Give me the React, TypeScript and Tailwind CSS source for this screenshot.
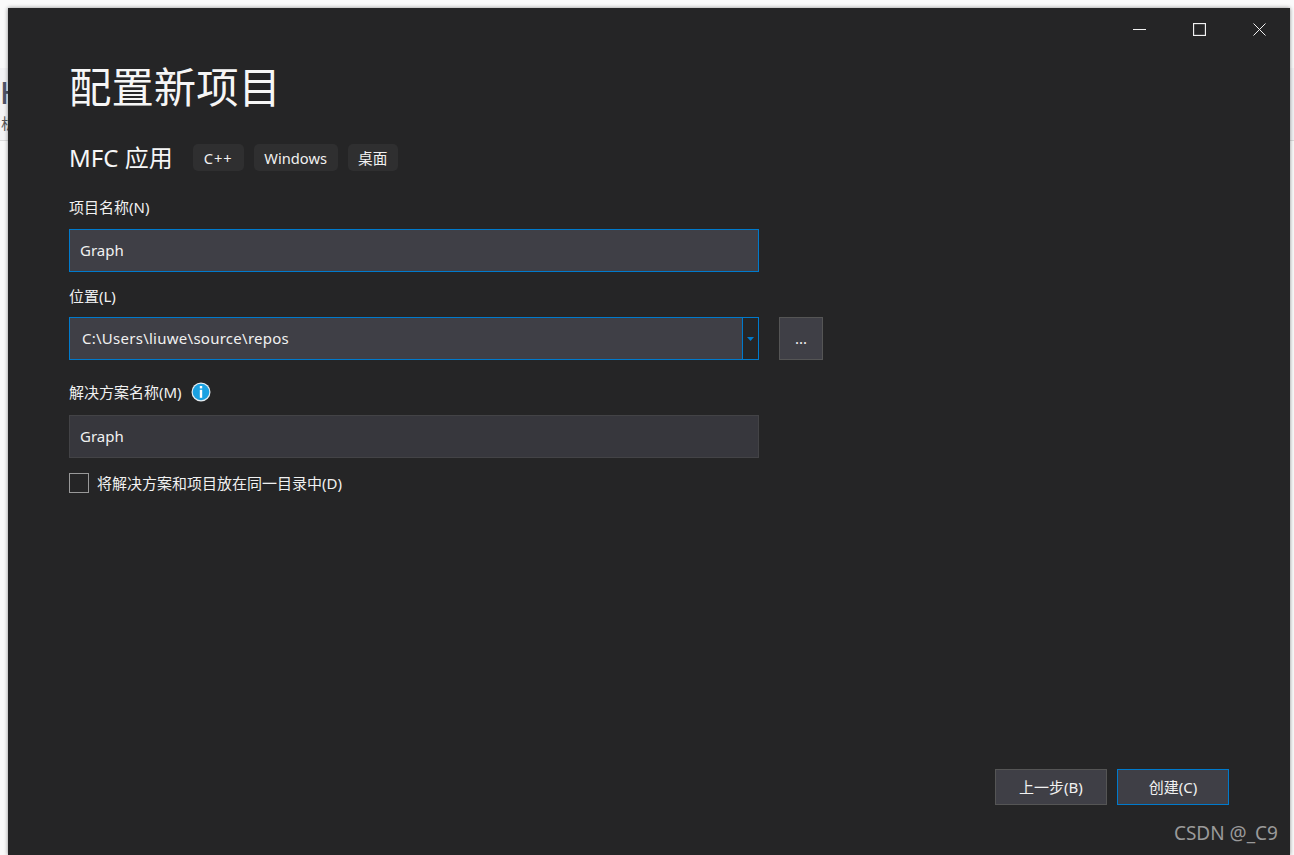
const font = "font-['Noto_Sans','Noto_Sans_CJK_SC',sans-serif]";

function Label({ children }: { children: React.ReactNode }) {
  return <div className="h-[22px] text-[15px] leading-[22px] text-[#f1f1f1]">{children}</div>;
}

function Tag({ children, width }: { children: React.ReactNode; width: string }) {
  return (
    <span className={`flex h-[27px] items-center justify-center rounded-[5px] bg-[#2f2f30] text-[14.67px] text-[#f1f1f1] ${width}`}>
      {children}
    </span>
  );
}

function InfoIcon() {
  return (
    <svg width="20" height="20" viewBox="0 0 20 20">
      <circle cx="10" cy="10" r="9.5" fill="#e8eef2" />
      <circle cx="10" cy="10" r="8.3" fill="#1ba1e2" />
      <rect x="8.8" y="4" width="2.4" height="2.4" fill="#fff" />
      <rect x="8.8" y="7.8" width="2.4" height="8" fill="#fff" />
    </svg>
  );
}

function WindowControls() {
  return (
    <div className="flex h-[42px] items-center justify-end gap-[47px] pr-[24px]">
      <svg width="13" height="13" viewBox="0 0 13 13" stroke="#f1f1f1" fill="none">
        <path d="M0 6.5H13" />
      </svg>
      <svg width="13" height="13" viewBox="0 0 13 13" stroke="#f1f1f1" fill="none">
        <rect x="0.5" y="0.5" width="12" height="12" strokeWidth="1.3" />
      </svg>
      <svg width="13" height="13" viewBox="0 0 13 13" stroke="#f1f1f1" fill="none">
        <path d="M0.5 0.5L12.5 12.5M12.5 0.5L0.5 12.5" />
      </svg>
    </div>
  );
}

export default function App() {
  return (
    <div className={`relative h-[855px] w-[1294px] overflow-hidden bg-[#fafafa] ${font}`}>
      {/* page behind the dialog */}
      <div className="absolute left-0 right-0 top-[68px] h-[73px] border-b border-[#dcdcdc] bg-[#f3f3f5]">
        <span className="absolute left-0 top-[7px] text-[30px] font-medium leading-[36px] text-[#4f5468]">H</span>
        <span className="absolute left-[1px] top-[45px] text-[15px] leading-[20px] text-[#555]">析</span>
      </div>

      <div className="relative ml-2 mt-2 flex h-[847px] w-[1282px] flex-col bg-[#252526] shadow-[0_0_4px_rgba(0,0,0,0.45)]">
        <WindowControls />

        <div className="flex flex-1 flex-col pl-[61px]">
          <h1 className="mt-[7px] h-[60px] text-[42.4px] font-normal leading-[60px] text-[#f6f6f6]">配置新项目</h1>

          <div className="mt-[27px] flex h-[27px] items-center">
            <span className="mr-[20px] text-[24px] leading-[27px] text-[#f6f6f6]">MFC 应用</span>
            <div className="flex gap-[10px]">
              <Tag width="w-[51px] tracking-[1px]">C++</Tag>
              <Tag width="w-[84px]">Windows</Tag>
              <Tag width="w-[50px]">桌面</Tag>
            </div>
          </div>

          <div className="mt-[25px]">
            <Label>项目名称(N)</Label>
          </div>
          <div className="mt-[11px] flex h-[43px] w-[690px] items-center border border-[#007acc] bg-[#3f3f46] pl-[10px] text-[15px] text-[#f1f1f1]">
            Graph
          </div>

          <div className="mt-[13px]">
            <Label>位置(L)</Label>
          </div>
          <div className="mt-[10px] flex items-center gap-[20px]">
            <div className="flex h-[43px] w-[690px] border border-[#007acc] bg-[#3f3f46] text-[15px] text-[#f1f1f1]">
              <div className="flex flex-1 items-center pl-[12px] tracking-[0.26px]">C:\Users\liuwe\source\repos</div>
              <div className="flex w-[16px] items-center justify-center border-l border-[#007acc] bg-[#252526]">
                <svg width="7" height="4" viewBox="0 0 7 4">
                  <path d="M0 0H7L3.5 4Z" fill="#007acc" />
                </svg>
              </div>
            </div>
            <div className="flex h-[43px] w-[44px] items-center justify-center border border-[#555555] bg-[#3f3f46] text-[15px] text-[#f1f1f1]">
              ...
            </div>
          </div>

          <div className="mt-[21px] flex h-[22px] items-center gap-[9px]">
            <Label>解决方案名称(M)</Label>
            <InfoIcon />
          </div>
          <div className="mt-[12px] flex h-[43px] w-[690px] items-center border border-[#434346] bg-[#37373d] pl-[10px] text-[15px] text-[#f1f1f1]">
            Graph
          </div>

          <div className="mt-[15px] flex h-[20px] items-center gap-[8px]">
            <div className="size-[20px] border border-[#999999]" />
            <span className="text-[15px] text-[#f1f1f1]">将解决方案和项目放在同一目录中(D)</span>
          </div>

          <div className="mt-[276px] flex gap-[10px] self-end pr-[61px]">
            <button className="h-[36px] w-[112px] border border-[#555555] bg-[#3f3f46] text-[15px] text-[#f1f1f1]">
              上一步(B)
            </button>
            <button className="h-[36px] w-[112px] border border-[#007acc] bg-[#3f3f46] text-[15px] text-[#f1f1f1]">
              创建(C)
            </button>
          </div>
        </div>

        <span className="absolute right-[12px] top-[812px] text-[19px] leading-[26px] text-[#9a9a9a]">
          CSDN @_C9
        </span>
      </div>
    </div>
  );
}
